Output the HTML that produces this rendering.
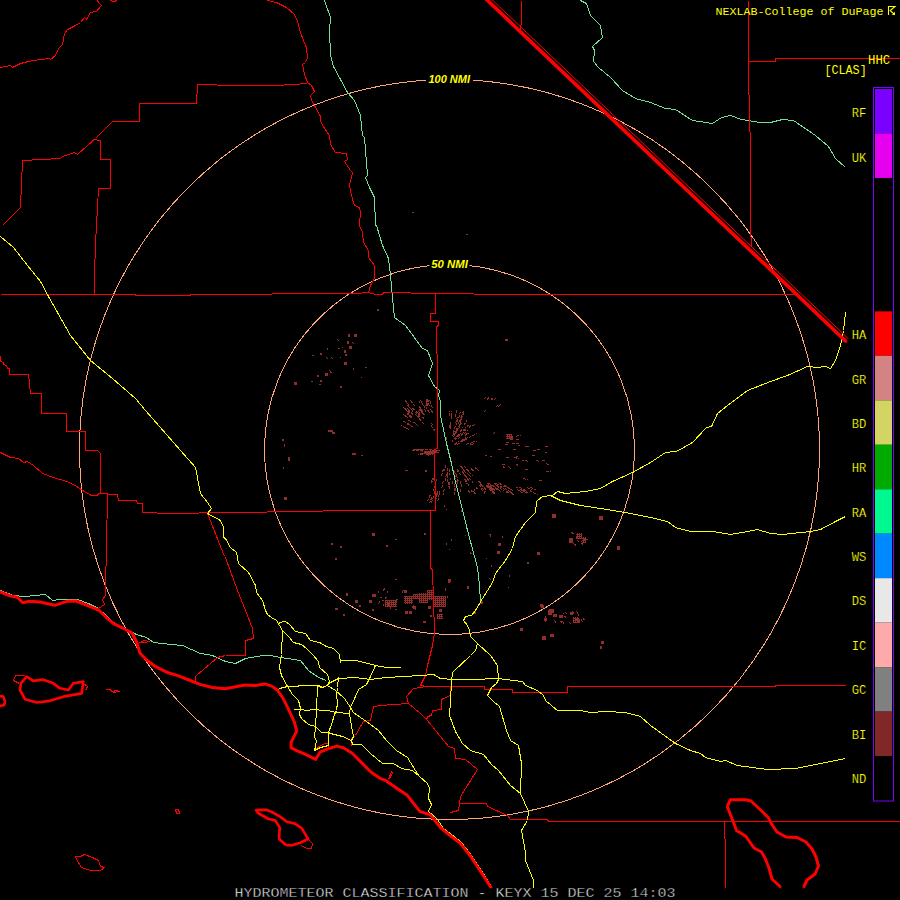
<!DOCTYPE html><html><head><meta charset="utf-8"><style>html,body{margin:0;padding:0;background:#000;width:900px;height:900px;overflow:hidden}svg{display:block}</style></head><body>
<svg width="900" height="900" viewBox="0 0 900 900">
<rect width="900" height="900" fill="#000"/>
<defs><pattern id="spk" width="2" height="2" patternUnits="userSpaceOnUse"><rect x="0" y="0" width="2" height="1" fill="#8f2e2a"/><rect x="1" y="1" width="1" height="1" fill="#8f2e2a"/></pattern></defs>
<g fill="#8f2e2a">
<rect x="377" y="309" width="2" height="2"/>
<rect x="348" y="334" width="2" height="3"/>
<rect x="354" y="334" width="3" height="3"/>
<rect x="347" y="341" width="2" height="3"/>
<rect x="349" y="346" width="3" height="3"/>
<rect x="344" y="350" width="2" height="3"/>
<rect x="345" y="354" width="2" height="2"/>
<rect x="344" y="362" width="3" height="3"/>
<rect x="365" y="367" width="2" height="1"/>
<rect x="312" y="355" width="2" height="1"/>
<rect x="320" y="353" width="2" height="2"/>
<rect x="325" y="373" width="3" height="3"/>
<rect x="317" y="375" width="2" height="2"/>
<rect x="320" y="380" width="2" height="2"/>
<rect x="311" y="381" width="2" height="1"/>
<rect x="319" y="384" width="2" height="1"/>
<rect x="294" y="382" width="3" height="3"/>
<rect x="340" y="386" width="2" height="2"/>
<rect x="328" y="430" width="5" height="2"/>
<rect x="332" y="432" width="3" height="2"/>
<rect x="282" y="439" width="2" height="2"/>
<rect x="284" y="444" width="1" height="3"/>
<rect x="412" y="212" width="2" height="1"/>
<rect x="466" y="234" width="2" height="1"/>
<rect x="505" y="339" width="3" height="2"/>
<rect x="352" y="453" width="4" height="2"/>
<rect x="361" y="455" width="2" height="1"/>
<rect x="288" y="457" width="2" height="4"/>
<rect x="283" y="467" width="1" height="2"/>
<rect x="284" y="497" width="3" height="3"/>
<rect x="405" y="470" width="3" height="1"/>
<rect x="425" y="470" width="2" height="2"/>
<rect x="372" y="533" width="3" height="3"/>
<rect x="424" y="533" width="2" height="2"/>
<rect x="331" y="543" width="2" height="2"/>
<rect x="340" y="546" width="2" height="2"/>
<rect x="335" y="558" width="2" height="2"/>
<rect x="386" y="545" width="2" height="2"/>
<rect x="395" y="539" width="2" height="1"/>
<rect x="395" y="579" width="2" height="1"/>
<rect x="448" y="579" width="3" height="3"/>
<rect x="335" y="608" width="3" height="2"/>
<rect x="346" y="593" width="2" height="3"/>
<rect x="355" y="600" width="3" height="3"/>
<rect x="359" y="605" width="2" height="2"/>
<rect x="343" y="614" width="2" height="2"/>
<rect x="369" y="600" width="3" height="3"/>
<rect x="372" y="594" width="4" height="3"/>
<rect x="380" y="597" width="2" height="1"/>
<rect x="382" y="600" width="2" height="1"/>
<rect x="385" y="600" width="12" height="7" fill="url(#spk)"/>
<rect x="372" y="609" width="2" height="2"/>
<rect x="395" y="609" width="2" height="1"/>
<rect x="404" y="590" width="3" height="3"/>
<rect x="404" y="596" width="9" height="8" fill="url(#spk)"/>
<rect x="413" y="594" width="7" height="5" fill="url(#spk)"/>
<rect x="419" y="593" width="9" height="10" fill="url(#spk)"/>
<rect x="413" y="606" width="3" height="3"/>
<rect x="405" y="611" width="3" height="3"/>
<rect x="409" y="611" width="3" height="3"/>
<rect x="427" y="590" width="6" height="10" fill="url(#spk)"/>
<rect x="433" y="596" width="13" height="11" fill="url(#spk)"/>
<rect x="428" y="606" width="3" height="3"/>
<rect x="439" y="609" width="3" height="3"/>
<rect x="437" y="614" width="6" height="5" fill="url(#spk)"/>
<rect x="430" y="615" width="2" height="2"/>
<rect x="423" y="621" width="3" height="2"/>
<rect x="448" y="579" width="2" height="4"/>
<rect x="395" y="579" width="2" height="1"/>
<rect x="552" y="514" width="4" height="4"/>
<rect x="599" y="516" width="4" height="4"/>
<rect x="576" y="533" width="6" height="6" fill="url(#spk)"/>
<rect x="582" y="537" width="4" height="6" fill="url(#spk)"/>
<rect x="569" y="538" width="4" height="5"/>
<rect x="498" y="543" width="3" height="3"/>
<rect x="497" y="551" width="3" height="3"/>
<rect x="537" y="552" width="3" height="3"/>
<rect x="527" y="562" width="2" height="2"/>
<rect x="617" y="546" width="3" height="4"/>
<rect x="467" y="586" width="2" height="3"/>
<rect x="480" y="601" width="3" height="3"/>
<rect x="473" y="611" width="3" height="3"/>
<rect x="540" y="604" width="3" height="3"/>
<rect x="548" y="610" width="4" height="5"/>
<rect x="553" y="614" width="4" height="3"/>
<rect x="559" y="615" width="4" height="3"/>
<rect x="570" y="612" width="3" height="3"/>
<rect x="573" y="617" width="6" height="6" fill="url(#spk)"/>
<rect x="577" y="619" width="3" height="4"/>
<rect x="544" y="618" width="3" height="3"/>
<rect x="520" y="628" width="3" height="3"/>
<rect x="542" y="636" width="4" height="4"/>
<rect x="550" y="634" width="4" height="3"/>
<rect x="601" y="641" width="3" height="3"/>
<rect x="600" y="646" width="2" height="3"/>
<rect x="541" y="605" width="3" height="3"/>
<rect x="549" y="609" width="5" height="4"/>
<rect x="506" y="434" width="6" height="5" fill="url(#spk)"/>
<rect x="509" y="436" width="4" height="3"/>
<rect x="491" y="398" width="2" height="2"/>
<rect x="419" y="401" width="1" height="2"/>
</g>
<path d="M420.1 419.2L414.2 413.0M419.7 417.1L415.3 412.3M411.9 417.1L406.8 412.6M428.0 405.7L426.0 401.4M409.7 424.8L403.6 421.0M409.1 429.5L401.3 425.5M424.2 419.1L421.7 416.1M405.8 416.3L403.1 414.2M410.6 408.7L408.4 406.4M420.1 415.9L414.8 409.8M421.1 420.5L417.0 416.1M424.6 415.2L421.9 411.4M435.3 431.1L430.5 424.7M425.7 411.4L423.4 407.6M414.7 405.9L410.0 399.9M417.7 425.5L413.5 422.2M432.6 425.1L430.9 422.6M412.6 427.1L407.6 424.1M433.1 413.3L431.7 410.2M423.9 423.7L420.6 420.4M409.7 413.0L403.3 407.0M427.0 406.2L425.0 402.2M409.5 405.5L404.3 399.7M411.3 417.9L407.0 414.3M411.1 421.9L408.0 419.6M424.1 406.5L421.3 401.8M413.2 411.5L407.1 405.1M429.3 412.9L425.3 405.6M413.0 414.5L407.2 408.8M424.8 407.6L420.4 399.8M412.8 410.8L407.6 405.2M414.7 410.3L412.4 407.7M408.4 418.1L404.8 415.4M423.1 413.4L419.8 408.7M432.5 408.0L430.3 402.6M430.8 403.1L429.4 399.6M431.6 411.6L429.8 407.7M422.9 411.8L418.5 405.4M423.0 414.3L418.5 408.4M427.2 406.1L425.7 402.9M419.9 413.2L417.2 409.9M429.3 405.6L426.4 399.1M427.2 404.6L425.5 401.1M428.9 401.8L427.3 398.0M432.8 452.3L421.3 454.2M426.6 452.9L417.5 454.3M422.6 450.2L412.0 450.5M423.2 449.8L413.0 449.9M432.4 449.6L422.2 449.7M438.8 452.3L427.3 455.5M433.8 451.4L425.1 452.5M424.4 449.2L410.9 449.0M433.6 452.9L425.7 454.7M434.6 450.8L422.3 452.0M426.9 453.3L418.6 454.7M433.5 451.7L420.2 453.6M436.6 451.5L424.0 453.5M439.5 450.3L427.4 451.2M438.3 452.1L428.1 454.6M436.8 452.1L425.6 454.5M458.6 426.8L460.9 421.4M458.5 418.3L460.3 412.4M465.0 440.2L470.7 436.8M453.5 437.1L455.6 431.5M454.9 438.8L456.5 435.8M461.4 416.7L463.6 411.1M455.8 422.8L457.4 416.5M455.5 434.3L458.4 427.3M451.5 415.6L451.8 411.1M460.2 420.7L461.6 417.1M464.1 434.0L467.7 430.3M464.0 425.2L467.3 419.8M450.2 429.0L450.6 422.0M464.0 439.9L468.2 437.2M458.2 423.9L459.5 420.4M455.0 440.3L458.9 434.2M459.9 441.8L463.4 439.3M449.7 428.3L449.8 423.9M450.5 428.1L450.9 421.9M455.9 425.6L457.9 418.7M466.6 427.4L468.7 424.8M447.0 439.9L446.4 436.7M460.4 431.5L462.8 427.6M462.7 415.3L464.1 411.8M455.3 417.2L456.7 410.2M451.1 418.7L451.3 415.5M458.6 428.7L461.1 423.2M457.9 439.4L463.0 433.5M460.1 421.3L462.0 416.3M449.9 416.0L450.0 410.6M460.9 420.2L462.5 416.2M452.8 435.9L454.4 430.5M458.1 436.9L461.0 432.9M462.0 440.3L464.8 438.3M465.2 435.2L467.9 432.7M454.6 434.7L457.3 427.6M453.3 433.1L455.2 425.9M461.3 441.8L465.8 439.0M459.2 422.0L461.5 415.8M461.9 434.1L466.1 429.1M454.6 444.7L459.2 440.9M472.2 436.1L476.7 433.5M457.1 444.5L461.7 441.6M459.2 426.5L460.8 423.1M463.0 440.9L466.3 438.9M452.2 441.8L453.1 439.8M469.3 428.0L471.5 425.6M469.3 427.1L471.0 425.1M461.7 440.5L466.1 437.4M466.0 444.4L469.8 443.2M472.8 425.9L474.9 423.9M462.6 431.3L465.6 427.4M464.6 436.2L468.7 432.8M463.8 431.2L466.0 428.5M470.1 443.2L472.8 442.4M469.6 444.8L473.6 443.8M457.9 469.4L460.5 475.1M456.7 481.2L457.5 484.3M469.5 478.2L472.7 482.6M464.6 479.0L467.4 484.3M460.9 466.2L464.5 471.2M453.9 487.6L455.0 496.1M450.0 477.4L450.1 481.2M454.4 484.1L455.7 492.4M455.7 473.3L456.9 477.2M460.0 489.2L461.0 492.9M464.0 466.0L466.8 469.1M448.8 482.4L448.8 487.3M452.5 481.3L452.9 484.9M462.2 467.7L465.7 472.7M449.4 469.1L449.6 475.2M454.5 474.1L455.7 479.4M457.1 469.2L458.7 473.1M459.9 480.7L462.0 486.5M465.6 479.3L469.5 486.5M449.0 482.3L449.0 490.2M467.6 473.3L470.6 477.1M466.7 469.3L472.7 476.0M467.1 468.9L470.1 472.1M462.9 472.2L464.7 475.3M464.9 474.7L469.0 481.2M446.2 473.9L445.4 481.0M443.5 468.8L441.6 475.6M468.5 490.5L470.1 493.8M456.5 483.8L457.8 489.7M461.7 470.4L463.5 473.4M445.8 464.9L444.5 471.1M457.0 479.9L457.9 483.7M447.8 468.3L447.3 476.3M470.9 489.5L472.6 492.7M444.2 488.9L443.5 494.6M463.4 473.0L466.5 478.0M456.5 475.0L458.4 481.4M443.1 481.3L441.7 489.2M447.6 475.1L447.2 482.5M453.7 470.1L454.6 474.0M434.4 477.0L430.9 483.6M438.0 490.6L436.1 497.6M435.5 485.3L433.4 490.9M433.7 496.3L431.5 503.0M430.2 495.1L427.6 501.3M437.3 493.9L436.0 498.7M439.1 494.4L437.8 500.8M437.2 492.9L435.8 497.7M436.7 479.2L434.9 483.6M433.2 478.1L430.9 482.3M435.2 490.5L433.9 494.5M439.7 491.0L438.7 495.6M435.8 488.7L434.0 494.1M431.9 497.1L429.8 502.9M523.4 478.3L528.0 480.1M471.2 468.8L474.4 471.5M490.0 456.7L492.1 457.1M485.1 455.1L487.4 455.5M489.2 486.9L491.9 489.4M509.1 490.9L512.1 493.0M546.5 471.1L550.8 472.0M475.2 467.8L478.7 470.3M473.9 488.6L475.2 490.7M506.1 442.7L509.5 442.3M516.3 436.1L521.0 435.2M502.0 464.2L505.6 465.2M497.5 449.7L501.5 449.7M512.7 449.6L516.8 449.6M492.8 433.3L495.4 432.4M472.3 442.3L476.4 441.1M499.7 486.4L503.1 488.9M473.7 491.2L476.1 495.4M475.8 486.8L477.7 489.5M507.1 491.5L509.4 493.1M510.1 489.0L513.6 491.2M505.7 491.4L509.3 494.0M516.2 439.4L520.0 438.8M505.5 444.7L507.6 444.5M510.5 440.0L513.8 439.5M521.7 460.0L524.5 460.4M514.3 457.7L518.6 458.3M510.4 492.5L514.4 495.2M527.1 446.8L529.4 446.7M538.8 480.0L542.5 481.3M487.0 482.8L494.6 489.5M493.2 485.6L500.7 491.8M499.5 483.4L505.7 487.6M504.8 488.1L514.0 494.5M478.6 481.7L483.8 487.3M490.3 486.8L495.2 491.2M493.6 482.6L498.9 486.5M496.4 485.4L504.2 491.4M488.5 485.4L493.9 490.3M486.4 486.1L494.3 493.8M478.5 481.0L485.9 488.9M495.9 487.8L501.5 492.5M488.6 482.6L496.9 489.5M486.7 485.1L495.4 493.3M486.0 484.8L493.6 492.0M504.2 485.2L511.1 489.7M480.9 488.5L485.0 493.5M479.6 485.1L485.4 491.9M496.2 483.3L504.9 489.5M478.9 482.0L485.7 489.4M515.9 486.9L522.8 490.7M527.3 487.5L532.3 489.9M521.3 489.8L526.9 492.9M516.9 489.4L523.1 493.1M529.8 490.7L537.5 494.6M522.7 490.3L528.2 493.3M519.5 487.3L527.3 491.5M530.3 487.1L536.1 489.8M532.4 455.2L535.2 455.4M532.7 450.0L535.9 450.1M542.3 460.5L546.0 461.0M536.7 449.5L540.3 449.5M545.1 452.7L547.2 452.8M535.8 460.7L538.9 461.1M546.4 463.9L550.0 464.5M524.8 460.7L528.3 461.2M525.3 446.6L528.8 446.5M544.9 446.7L548.2 446.6M569.6 540.2L572.2 542.2M571.4 532.3L574.4 534.3M577.3 540.7L579.6 542.3M573.4 543.5L576.1 545.5M576.5 537.1L579.3 539.0M581.0 542.9L583.3 544.5M583.0 539.0L586.1 541.0M582.6 541.4L585.7 543.6M585.9 538.8L588.4 540.4M581.0 541.2L583.4 542.8M403.3 589.7L402.3 593.0M447.3 595.5L447.3 597.8M386.4 596.6L385.4 599.0M445.7 588.1L445.6 590.7M379.7 601.3L378.2 604.5M384.6 588.1L383.4 590.8M415.8 607.9L415.3 609.9M379.0 591.2L377.9 593.3M388.9 603.0L387.8 606.0M388.0 591.1L387.0 593.4M384.0 604.2L382.9 606.6M413.1 605.4L412.4 608.2M391.0 606.6L389.7 610.2M397.3 598.7L396.0 602.4M563.2 612.8L564.4 614.5M581.1 619.5L582.8 621.7M564.8 616.1L566.3 618.2M582.8 617.9L584.4 619.9M544.7 615.5L546.1 617.9M575.1 618.3L577.0 620.8M550.4 611.8L551.8 614.0M554.3 620.1L555.9 622.7M569.1 621.9L570.6 624.0M564.8 611.4L566.9 614.2M544.2 619.2L546.0 622.5M576.3 611.0L577.8 613.0M572.0 611.0L573.8 613.3M562.4 621.1L564.2 623.8M577.3 613.2L579.5 616.1M560.7 621.1L561.9 622.9M354.0 343.9L352.6 342.3M339.2 341.1L337.3 339.2M328.0 349.4L327.1 348.7M328.3 358.8L326.3 357.4M330.5 371.2L329.5 370.5M332.9 358.7L330.6 356.9M353.9 369.3L353.1 368.6M331.5 372.6L330.2 371.8M340.6 357.9L339.8 357.2M362.1 377.8L361.0 376.9M343.4 348.4L342.2 347.2M339.6 348.9L338.4 347.7M451.7 539.2L451.8 540.8M446.0 543.1L446.0 544.7M468.1 532.6L468.6 535.0M449.9 549.0L450.0 550.2M444.3 504.5L444.1 506.8M461.1 509.9L461.4 511.7M465.0 535.0L465.2 536.1M446.8 508.8L446.8 510.0M489.7 533.8L491.0 536.4M491.0 564.7L491.7 566.9M508.0 586.7L508.7 588.3M486.4 558.4L486.7 559.3M489.6 577.6L490.5 580.4M509.0 575.2L510.0 577.2M470.8 552.3L471.1 554.0M502.1 536.7L503.0 538.2M484.0 412.1L486.5 409.4M487.3 399.6L489.4 396.8M496.1 406.9L498.1 405.1M484.0 399.2L486.0 396.4M498.3 406.4L500.9 404.2M493.8 400.4L496.4 397.5M517.7 446.0L519.9 445.9M505.7 457.1L509.0 457.5M508.6 467.5L511.2 468.3M511.9 443.9L515.9 443.5M502.6 466.7L505.5 467.6M515.6 456.7L518.1 456.9M525.5 469.3L529.0 470.2M516.2 443.8L519.9 443.5M507.5 466.6L509.8 467.3M516.1 464.7L518.4 465.2" stroke="#94302b" stroke-width="1" fill="none" stroke-dasharray="3 1" shape-rendering="crispEdges"/>
<g stroke="#72e296" stroke-width="1" fill="none" shape-rendering="crispEdges">
<polyline points="324.5,0.5 330.5,17.5 329.5,30.5 330.5,55.5 333.5,66.5 340.5,79.5 347.5,92.5 354.5,100.5 360.5,115.5 362.5,135.5 364.5,137.5 367.5,175.5 365.5,177.5 369.5,187.5 374.5,197.5 375.5,225.5 376.5,225.5 382.5,245.5 388.5,258.5 390.5,275.5 392.5,297.5 394.5,317.5 405.5,325.5 422.5,348.5 427.5,350.5 432.5,363.5 428.5,375.5 434.5,386.5 439.5,390.5 438.5,395.5 440.5,401.5 440.5,415.5 446.5,443.5 451.5,463.5 456.5,486.5 460.5,501.5 467.5,530.5 477.5,567.5 479.5,585.5 480.5,602.5"/>
<polyline points="580.5,0.5 586.5,3.5 590.5,15.5 600.5,25.5 602.5,37.5 592.5,46.5 594.5,50.5 593.5,61.5 598.5,67.5 610.5,77.5 622.5,90.5 635.5,98.5 650.5,102.5 665.5,108.5 675.5,109.5 692.5,120.5 712.5,123.5 721.5,117.5 730.5,115.5 741.5,119.5 760.5,122.5 770.5,122.5 782.5,119.5 793.5,120.5 815.5,135.5 828.5,146.5 835.5,158.5 845.5,167.5"/>
<polyline points="0.5,590.5 13.5,595.5 24.5,596.5 45.5,594.5 52.5,600.5 60.5,599.5 77.5,599.5 88.5,603.5 98.5,608.5 113.5,622.5 124.5,628.5 136.5,634.5 146.5,637.5 153.5,642.5 171.5,644.5 182.5,645.5 200.5,653.5 212.5,655.5 225.5,661.5 235.5,663.5 245.5,658.5 262.5,655.5 270.5,655.5 280.5,657.5 300.5,660.5 308.5,670.5 318.5,677.5 326.5,680.5"/>
</g>
<g stroke="#ffa676" stroke-width="1" fill="none" shape-rendering="crispEdges">
<circle cx="449.5" cy="449.5" r="370"/>
<circle cx="449.5" cy="449.5" r="185"/>
</g>
<g stroke="#ff0000" stroke-width="1" fill="none" shape-rendering="crispEdges">
<polyline points="0.5,67.5 10.5,65.5 12.5,67.5 20.5,63.5 28.5,61.5 40.5,59.5 49.5,58.5 50.5,59.5 55.5,55.5 58.5,48.5 62.5,44.5 64.5,33.5 67.5,29.5 75.5,25.5 80.5,22.5 84.5,17.5 86.5,19.5 90.5,12.5 96.5,11.5 101.5,5.5 98.5,2.5 97.5,0.5"/>
<polyline points="110.5,0.5 113.5,1.5 117.5,0.5"/>
<polyline points="2.5,225.5 20.5,207.5 22.5,160.5 60.5,158.5 62.5,156.5 74.5,152.5 77.5,154.5 95.5,138.5 112.5,121.5 139.5,121.5 139.5,103.5 196.5,103.5 197.5,84.5 235.5,85.5 275.5,85.5 292.5,84.5 307.5,83.5"/>
<polyline points="93.5,139.5 100.5,140.5 100.5,159.5 110.5,159.5 110.5,188.5 98.5,188.5 96.5,225.5 95.5,242.5 94.5,275.5 94.5,294.5"/>
<polyline points="267.5,0.5 276.5,2.5 286.5,7.5 294.5,14.5 297.5,21.5 300.5,32.5 305.5,45.5 306.5,47.5 307.5,57.5 305.5,62.5 302.5,64.5 304.5,74.5 307.5,82.5 311.5,85.5 314.5,91.5 310.5,95.5 311.5,100.5 314.5,105.5 320.5,116.5 320.5,120.5 322.5,125.5 329.5,135.5 330.5,144.5 335.5,152.5 346.5,153.5 347.5,159.5 344.5,161.5 350.5,170.5 352.5,172.5 349.5,185.5 351.5,195.5 354.5,205.5 359.5,207.5 360.5,211.5 359.5,225.5 362.5,232.5 363.5,242.5 368.5,250.5 368.5,257.5 374.5,265.5 374.5,278.5 370.5,285.5 368.5,292.5"/>
<polyline points="0.5,294.5 135.5,294.5 135.5,295.5 190.5,295.5 190.5,294.5 355.5,293.5 368.5,292.5 375.5,294.5 382.5,294.5 383.5,292.5 410.5,292.5 411.5,293.5 473.5,293.5 474.5,294.5 795.5,294.5"/>
<polyline points="435.5,293.5 435.5,313.5 430.5,313.5 430.5,321.5 438.5,321.5 438.5,325.5 436.5,326.5 437.5,380.5 437.5,448.5 434.5,449.5 435.5,510.5"/>
<polyline points="0.5,452.5 10.5,457.5 18.5,458.5 23.5,462.5 27.5,461.5 33.5,465.5 42.5,473.5 53.5,477.5 66.5,481.5 75.5,485.5 82.5,490.5 91.5,495.5 97.5,495.5 98.5,493.5 117.5,494.5 118.5,500.5 136.5,500.5 137.5,503.5 142.5,503.5 142.5,512.5 170.5,513.5 197.5,513.5 200.5,512.5 266.5,512.5 267.5,511.5 322.5,511.5 323.5,510.5 435.5,510.5"/>
<polyline points="0.5,355.5 0.5,361.5 3.5,362.5 3.5,364.5 6.5,365.5 7.5,368.5 9.5,368.5 9.5,374.5 28.5,374.5 30.5,393.5 41.5,393.5 41.5,413.5 66.5,413.5 66.5,431.5 85.5,431.5 85.5,450.5 97.5,450.5 100.5,453.5 100.5,493.5"/>
<polyline points="107.5,494.5 106.5,545.5 105.5,588.5 105.5,595.5 102.5,599.5 104.5,604.5 98.5,608.5"/>
<polyline points="207.5,513.5 224.5,556.5"/>
<polyline points="196.5,675.5 217.5,657.5 225.5,655.5"/>
<polyline points="225.5,557.5 237.5,590.5 247.5,615.5 252.5,628.5 253.5,638.5 245.5,640.5 245.5,655.5 225.5,655.5"/>
<polyline points="430.5,510.5 430.5,568.5 432.5,569.5 433.5,600.5 434.5,632.5 432.5,645.5 427.5,665.5 425.5,675.5 420.5,685.5"/>
<polyline points="521.5,0.5 521.5,18.5 520.5,31.5"/>
<polyline points="748.5,0.5 748.5,75.5 750.5,150.5 750.5,225.5 751.5,247.5"/>
<polyline points="748.5,61.5 775.5,61.5 775.5,58.5 900.5,58.5"/>
<polyline points="351.5,745.5 351.5,738.5 355.5,735.5 360.5,726.5 363.5,721.5 370.5,720.5 373.5,706.5 380.5,705.5 408.5,703.5 406.5,696.5 413.5,688.5 420.5,687.5 426.5,686.5 450.5,686.5 484.5,686.5 484.5,689.5 512.5,689.5 512.5,692.5 567.5,692.5 567.5,686.5 775.5,686.5 775.5,685.5 845.5,685.5"/>
<polyline points="408.5,703.5 420.5,713.5 427.5,720.5 448.5,746.5 454.5,748.5 455.5,758.5 465.5,759.5 477.5,769.5 460.5,796.5 458.5,810.5 450.5,812.5"/>
<polyline points="450.5,686.5 450.5,695.5 441.5,699.5 441.5,709.5 432.5,710.5 431.5,715.5 427.5,716.5 426.5,720.5"/>
<polyline points="458.5,803.5 486.5,803.5 487.5,806.5 507.5,815.5 510.5,819.5 547.5,819.5 548.5,821.5 900.5,821.5"/>
<polyline points="724.5,822.5 725.5,855.5 725.5,887.5"/>
<polyline points="426.5,686.5 420.5,685.5"/>
<polyline points="75.5,856.5 80.5,856.5 84.5,854.5 92.5,857.5 98.5,860.5 100.5,866.5 104.5,867.5 100.5,870.5 90.5,870.5 81.5,867.5 76.5,859.5 75.5,856.5"/>
<polyline points="175.5,809.5 178.5,809.5 179.5,813.5 176.5,813.5 175.5,809.5"/>
<polyline points="105.5,689.5 110.5,689.5 112.5,691.5 116.5,690.5 118.5,691.5 113.5,692.5 110.5,690.5"/>
<polyline points="13.5,680.5 15.5,675.5 23.5,675.5 26.5,676.5"/>
<polyline points="13.5,680.5 19.5,683.5"/>
<polyline points="83.5,683.5 87.5,686.5 85.5,690.5"/>
<polyline points="139.5,642.5 144.5,640.5 149.5,641.5 144.5,642.5 139.5,642.5"/>
<polyline points="195.5,675.5 195.5,681.5"/>
<polyline points="388.5,779.5 391.5,771.5"/>
<polyline points="389.5,779.5 392.5,772.5"/>
<polyline points="316.5,748.5 320.5,745.5 325.5,743.5 328.5,743.5 328.5,746.5"/>
<polyline points="308.5,839.5 312.5,843.5 311.5,848.5 306.5,848.5 301.5,845.5"/>
</g>
<g stroke="#ffff00" stroke-width="1" fill="none" shape-rendering="crispEdges">
<polyline points="0.5,236.5 13.5,247.5 27.5,265.5 40.5,281.5 48.5,296.5 70.5,335.5 90.5,360.5 112.5,378.5 135.5,398.5 145.5,410.5 180.5,450.5 195.5,467.5 200.5,493.5 207.5,502.5 211.5,508.5 207.5,513.5 220.5,520.5 223.5,527.5 223.5,537.5 225.5,538.5 230.5,547.5 236.5,552.5 238.5,563.5 248.5,572.5 255.5,585.5 256.5,592.5 262.5,600.5 265.5,610.5 267.5,614.5 271.5,617.5 276.5,620.5 282.5,630.5 288.5,636.5 293.5,642.5 301.5,644.5 306.5,648.5 312.5,654.5 318.5,661.5 319.5,667.5 327.5,674.5 329.5,681.5 327.5,685.5 322.5,687.5 319.5,685.5"/>
<polyline points="278.5,624.5 279.5,622.5 285.5,621.5 289.5,624.5 295.5,631.5 305.5,633.5 310.5,640.5 319.5,642.5 326.5,646.5 333.5,648.5 339.5,654.5 340.5,663.5"/>
<polyline points="339.5,660.5 352.5,660.5 356.5,660.5 375.5,665.5 386.5,667.5 400.5,667.5"/>
<polyline points="282.5,630.5 281.5,654.5 279.5,667.5 281.5,675.5 287.5,686.5 292.5,694.5 298.5,700.5 300.5,708.5 299.5,714.5 301.5,718.5 308.5,724.5 315.5,726.5 321.5,732.5 328.5,732.5 330.5,733.5 342.5,736.5 351.5,740.5 352.5,744.5 361.5,744.5 370.5,753.5 382.5,763.5 393.5,763.5 401.5,768.5 412.5,770.5 419.5,776.5 427.5,783.5 429.5,788.5 428.5,798.5 431.5,804.5 428.5,811.5 437.5,819.5 443.5,828.5 451.5,834.5 461.5,842.5 471.5,855.5 481.5,870.5 492.5,888.5"/>
<polyline points="277.5,691.5 279.5,688.5 287.5,686.5 297.5,686.5 299.5,685.5 317.5,685.5 321.5,687.5 327.5,685.5 330.5,682.5 338.5,678.5 355.5,677.5 370.5,679.5 386.5,677.5 420.5,675.5 433.5,674.5 440.5,678.5 453.5,679.5 473.5,679.5 497.5,678.5 522.5,681.5 525.5,685.5 537.5,690.5 543.5,695.5 545.5,700.5 557.5,710.5 580.5,710.5 590.5,712.5 605.5,711.5 625.5,712.5 640.5,716.5 650.5,725.5 675.5,743.5 690.5,750.5 700.5,753.5 705.5,757.5 720.5,761.5 725.5,760.5 737.5,765.5 767.5,769.5 795.5,768.5 820.5,763.5 845.5,758.5"/>
<polyline points="317.5,685.5 316.5,710.5 315.5,726.5 314.5,737.5 316.5,740.5 315.5,746.5 314.5,750.5 320.5,747.5 328.5,745.5"/>
<polyline points="338.5,677.5 337.5,687.5 336.5,694.5 337.5,702.5 336.5,710.5 334.5,714.5 331.5,724.5 328.5,732.5 328.5,745.5"/>
<polyline points="293.5,709.5 302.5,709.5 305.5,710.5 314.5,709.5 322.5,710.5 328.5,710.5 335.5,712.5 350.5,713.5"/>
<polyline points="327.5,685.5 335.5,690.5 344.5,698.5 350.5,707.5 353.5,712.5 360.5,717.5 366.5,721.5 378.5,730.5 386.5,740.5 396.5,750.5 407.5,757.5 410.5,762.5 415.5,770.5 419.5,776.5"/>
<polyline points="350.5,707.5 349.5,713.5 351.5,726.5 353.5,736.5 351.5,740.5 352.5,744.5"/>
<polyline points="375.5,665.5 370.5,676.5 366.5,684.5 358.5,689.5 355.5,696.5 350.5,707.5"/>
<polyline points="469.5,630.5 470.5,636.5 477.5,643.5 475.5,650.5 470.5,655.5 452.5,672.5 451.5,681.5 450.5,701.5 449.5,715.5 455.5,731.5 462.5,743.5 470.5,750.5 483.5,754.5 491.5,764.5 498.5,770.5 510.5,785.5 520.5,793.5 528.5,811.5 527.5,820.5 521.5,830.5 525.5,852.5 525.5,860.5 533.5,880.5 533.5,888.5"/>
<polyline points="477.5,643.5 490.5,655.5 497.5,665.5 498.5,679.5 496.5,683.5 491.5,687.5 487.5,695.5 493.5,701.5 499.5,706.5 506.5,730.5 510.5,740.5 518.5,745.5 521.5,763.5 520.5,793.5"/>
<polyline points="845.5,312.5 843.5,330.5 840.5,345.5 835.5,360.5 830.5,368.5 825.5,366.5 817.5,367.5 807.5,366.5 787.5,375.5 770.5,381.5 747.5,390.5 727.5,405.5 717.5,413.5 711.5,426.5 706.5,427.5 692.5,442.5 678.5,450.5 675.5,451.5 665.5,452.5 650.5,462.5 632.5,472.5 612.5,481.5 600.5,488.5 585.5,491.5 565.5,493.5 557.5,491.5 552.5,495.5 542.5,496.5 536.5,501.5 535.5,512.5 525.5,522.5 515.5,536.5 512.5,548.5 505.5,560.5 495.5,573.5 492.5,582.5 482.5,598.5 475.5,610.5 471.5,615.5 465.5,616.5 463.5,620.5 467.5,625.5 469.5,630.5"/>
<polyline points="550.5,495.5 560.5,500.5 580.5,505.5 600.5,508.5 625.5,512.5 650.5,517.5 667.5,521.5 675.5,527.5 690.5,531.5 712.5,531.5 730.5,534.5 747.5,531.5 757.5,529.5 770.5,533.5 782.5,534.5 810.5,531.5 820.5,529.5 835.5,521.5 845.5,516.5"/>
</g>
<g stroke="#ff0000" fill="none" stroke-linejoin="round" stroke-linecap="round">
<polyline points="486,-1 845.5,341" stroke-width="3.6"/>
<polyline points="488.6,-3.6 848,338.4" stroke-width="1"/>
<polyline points="0,592 10.7,596 17.3,597.3 22.7,602.7 29.3,601.3 40,602 54.7,605.3 66.7,601.3 76,601 85.3,604.7 98.7,610 106.7,617.8 113.3,623.3 122.2,627.8 132.2,633.3 136.7,642.2 140,653.3 146.7,660 155.6,666.7 166.7,672.2 177.8,675.6 188.9,680 200,684.4 212.5,687.5 225,688.75 245,685 255,685.6 265,683.9 271.7,686.1 277.2,690 282.8,697.8 288.3,708.9 294.4,722.2 296.7,731.1 291.1,742.2 291.1,747.8 297.8,751.1 305.6,754.4 315.6,759.4 320,752.2 327.8,748.9 336.7,746.1 343.3,747.8 352.2,753.3 360,761.1 371.1,772.2 380,778.3 386,780.7 396.7,788.2 407.3,795.3 419.8,811.3 430.4,814.9 441.1,828.2 450,835.5 460,843 470,855.5 480,870.5 491.25,888" stroke-width="3"/>
<polyline points="26.7,676.7 33.3,680.8 43.3,679.7 53.3,683.3 60,688.3 68.3,690 73.3,683.3 83.3,681.7 81.7,693.3 63.3,696.7 50,700.8 36.7,702.5 25,699.2 20,690 20.8,683.3 26.7,676.7" stroke-width="2.7"/>
<polyline points="-2,695.8 3.3,696.7 5,701.7 4.2,705 -2,706.7" stroke-width="2.7"/>
<polyline points="256.1,810.2 261,809.8 266.3,809.8 271.7,812 279.7,816.4 286.8,821.8 294.8,823.6 301.9,828.4 308.1,839.1 300.1,842.7 292.1,845.3 285.9,844.9 279.2,839.1 279.2,834.7 279.7,827.6 275.2,820.4 268.1,818.7 258.3,813.3 256.1,810.2" stroke-width="2.7"/>
<polyline points="780,886.5 772,879 769,868 765,858 761.5,852 754,848 746,836.5 740,832.5 736.7,830.7 733.3,822 731.3,816.7 727.3,806.7 730.3,799.7 745.7,799.7 751,801 762.7,812 768.7,818 770.7,822.7 777,832 786,837 797,837.5 806,842 812,849 816,857 818.5,866 815,874 807,880 804,886.5" stroke-width="3"/>
</g>
<g font-family="Liberation Sans, sans-serif" font-style="italic" font-weight="bold" font-size="10.5" fill="#ffff00">
<rect x="426" y="72" width="47" height="14" fill="#000"/>
<text x="428.5" y="83" textLength="41.5" lengthAdjust="spacingAndGlyphs">100 NMI</text>
<rect x="429.5" y="257" width="40" height="14" fill="#000"/>
<text x="431.3" y="268" textLength="36.5" lengthAdjust="spacingAndGlyphs">50 NMI</text>
</g>
<rect x="0" y="888" width="900" height="12" fill="#000"/>
<rect x="873.5" y="87.5" width="20" height="713.5" fill="none" stroke="#7f00ff" stroke-width="1"/>
<rect x="875" y="89.00" width="17" height="44.47" fill="#7a00ff"/>
<rect x="875" y="133.47" width="17" height="44.47" fill="#e600f0"/>
<rect x="875" y="311.35" width="17" height="44.47" fill="#ff0000"/>
<rect x="875" y="355.82" width="17" height="44.47" fill="#d38383"/>
<rect x="875" y="400.29" width="17" height="44.47" fill="#d4d464"/>
<rect x="875" y="444.76" width="17" height="44.47" fill="#00aa00"/>
<rect x="875" y="489.23" width="17" height="44.47" fill="#00f890"/>
<rect x="875" y="533.70" width="17" height="44.47" fill="#0088ff"/>
<rect x="875" y="578.17" width="17" height="44.47" fill="#e8e8e8"/>
<rect x="875" y="622.64" width="17" height="44.47" fill="#ffaaaa"/>
<rect x="875" y="667.11" width="17" height="44.47" fill="#808080"/>
<rect x="875" y="711.58" width="17" height="44.47" fill="#802828"/>
<g font-family="Liberation Mono, monospace" font-size="13" fill="#ffff00" stroke="#000" stroke-width="0.2">
<text x="851.7" y="117.2" textLength="14.6" lengthAdjust="spacingAndGlyphs">RF</text>
<text x="851.7" y="161.6" textLength="14.6" lengthAdjust="spacingAndGlyphs">UK</text>
<text x="851.7" y="339.1" textLength="14.6" lengthAdjust="spacingAndGlyphs">HA</text>
<text x="851.7" y="383.5" textLength="14.6" lengthAdjust="spacingAndGlyphs">GR</text>
<text x="851.7" y="427.9" textLength="14.6" lengthAdjust="spacingAndGlyphs">BD</text>
<text x="851.7" y="472.2" textLength="14.6" lengthAdjust="spacingAndGlyphs">HR</text>
<text x="851.7" y="516.6" textLength="14.6" lengthAdjust="spacingAndGlyphs">RA</text>
<text x="851.7" y="561.0" textLength="14.6" lengthAdjust="spacingAndGlyphs">WS</text>
<text x="851.7" y="605.4" textLength="14.6" lengthAdjust="spacingAndGlyphs">DS</text>
<text x="851.7" y="649.8" textLength="14.6" lengthAdjust="spacingAndGlyphs">IC</text>
<text x="851.7" y="694.1" textLength="14.6" lengthAdjust="spacingAndGlyphs">GC</text>
<text x="851.7" y="738.5" textLength="14.6" lengthAdjust="spacingAndGlyphs">BI</text>
<text x="851.7" y="782.9" textLength="14.6" lengthAdjust="spacingAndGlyphs">ND</text>
</g>
<g font-family="Liberation Mono, monospace" font-size="12.5" fill="#ffff00">
<text x="868" y="64" textLength="22.2" lengthAdjust="spacingAndGlyphs">HHC</text>
<text x="824.4" y="73.6" textLength="42.3" lengthAdjust="spacingAndGlyphs" font-size="12">[CLAS]</text>
<text x="715.5" y="15.3" font-size="11.6" textLength="168" lengthAdjust="spacingAndGlyphs">NEXLAB-College of DuPage</text>
</g>
<path d="M888.5,15 V6.5 H895 L890.2,10.5 L894.5,14.5" stroke="#ffff00" stroke-width="1.1" fill="none"/><path d="M895,11.8 V15 H891.8 Z" fill="#ffff00"/>
<text x="234.5" y="897" font-family="Liberation Mono, monospace" font-size="12" fill="#ffffff" stroke="#000" stroke-width="0.4" textLength="441" lengthAdjust="spacingAndGlyphs">HYDROMETEOR CLASSIFICATION - KEYX 15 DEC 25 14:03</text>
</svg></body></html>
